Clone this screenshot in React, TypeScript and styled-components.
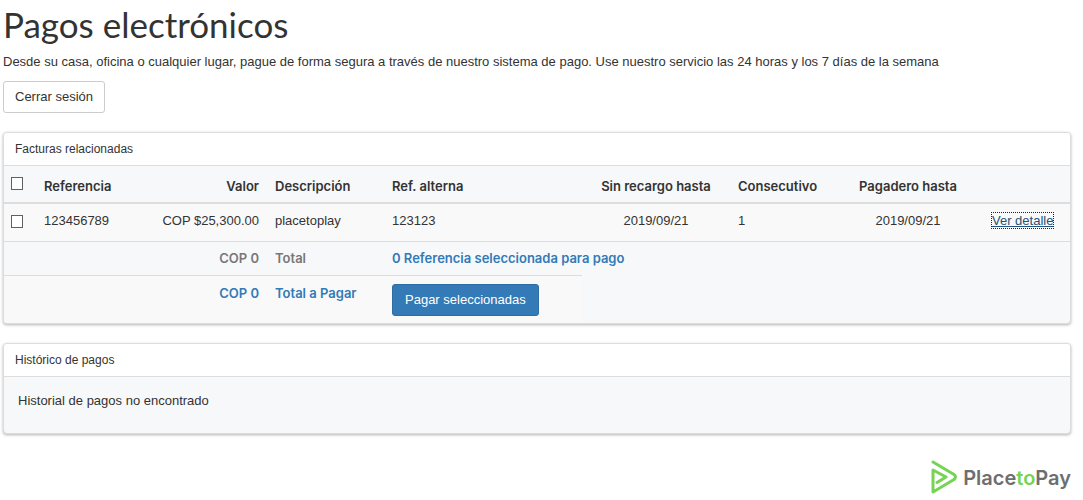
import React from "react";
import styled, { createGlobalStyle } from "styled-components";

const strongFont = `Inter, "Liberation Sans", sans-serif`;

const GlobalStyle = createGlobalStyle`
  *, *::before, *::after { box-sizing: border-box; }
  body {
    margin: 0;
    background: #fff;
    color: #333;
    font-family: "Liberation Sans", Arial, sans-serif;
    font-size: 13px;
    line-height: 20px;
  }
`;

const Page = styled.div`
  padding: 4px 12px 6px 3px;
`;

const Title = styled.h1`
  margin: 0 0 8px;
  font-family: Lato, "Liberation Sans", sans-serif;
  font-size: 35px;
  font-weight: 400;
  line-height: 40px;
`;

const Intro = styled.p`
  margin: 0 0 9px;
`;

const Button = styled.button<{ $primary?: boolean }>`
  display: block;
  height: 32px;
  padding: 0 ${(p) => (p.$primary ? "12px" : "11px")};
  border: 1px solid ${(p) => (p.$primary ? "#2e6da4" : "#ccc")};
  border-radius: 3px;
  background: ${(p) => (p.$primary ? "#337ab7" : "#fff")};
  color: ${(p) => (p.$primary ? "#fff" : "#333")};
  font: inherit;
  white-space: nowrap;
  cursor: pointer;
`;

const Panel = styled.section`
  margin-top: 19px;
  border: 1px solid #ddd;
  border-radius: 4px;
  background: #f7f8fa;
  box-shadow: 0 1px 3px rgba(0, 0, 0, 0.3);
  overflow: hidden;
`;

const PanelHeading = styled.h2`
  margin: 0;
  padding: 6px 11px;
  border-bottom: 1px solid #ddd;
  background: #fff;
  font-size: 12px;
  font-weight: 400;
  line-height: 20px;
`;

const PanelBody = styled.div`
  padding: 14px 14px 22px;
`;

const Table = styled.table`
  width: 100%;
  table-layout: fixed;
  border-collapse: separate;
  border-spacing: 0;
`;

type Align = "left" | "right" | "center";

const HeadCell = styled.th<{ $align?: Align }>`
  padding: 10px 8px 6px;
  border-bottom: 2px solid #ddd;
  font-family: ${strongFont};
  font-weight: 600;
  text-align: ${(p) => p.$align ?? "left"};
  vertical-align: top;
  white-space: nowrap;
`;

const Cell = styled.td<{ $align?: Align }>`
  height: 37px;
  padding: 7px 8px;
  background: #f9f9f9;
  text-align: ${(p) => p.$align ?? "left"};
  vertical-align: top;
  white-space: nowrap;
`;

const TotalCell = styled.td<{ $align?: Align; $tone?: "muted" | "link"; $striped?: boolean }>`
  padding: ${(p) => (p.$striped ? "7px 8px 7px" : "6px 8px 7px")};
  border-top: 1px solid #ddd;
  background: ${(p) => (p.$striped ? "#f9f9f9" : "transparent")};
  color: ${(p) => (p.$tone === "link" ? "#337ab7" : "#777")};
  font-family: ${strongFont};
  font-weight: 600;
  text-align: ${(p) => p.$align ?? "left"};
  vertical-align: top;
  white-space: nowrap;
`;

const ActionCell = styled.td`
  padding: 8px 8px 7px;
  border-top: 1px solid #ddd;
  background: #f9f9f9;
`;

const Checkbox = styled.input`
  appearance: none;
  display: block;
  width: 12px;
  height: 13px;
  margin: 4px 0 3px -1px;
  border: 1px solid #606060;
  background: #fff;

  thead & { margin: 1px 0 6px -1px; }
  &:checked { background: #337ab7; }
`;

const DetailLink = styled.a`
  color: #23527c;
  text-decoration: underline;
  outline: 1px dotted #222;
`;

const Footer = styled.footer`
  display: flex;
  justify-content: flex-end;
  align-items: center;
  gap: 5px;
  margin-top: 26px;
`;

const Brand = styled.span`
  padding-top: 2px;
  color: #6d6e70;
  font-family: ${strongFont};
  font-size: 20px;
  font-weight: 600;
  line-height: 32px;
`;

const BrandAccent = styled.span`
  color: #77d353;
`;

const columnWidths = [32, 114, 117, 117, 198, 148, 102, 152, 86];

export default function App() {
  return (
    <>
      <GlobalStyle />
      <Page>
        <Title>Pagos electrónicos</Title>
        <Intro>
          Desde su casa, oficina o cualquier lugar, pague de forma segura a través de nuestro sistema de pago. Use
          nuestro servicio las 24 horas y los 7 días de la semana
        </Intro>
        <Button type="button">Cerrar sesión</Button>

        <Panel>
          <PanelHeading>Facturas relacionadas</PanelHeading>
          <Table>
            <colgroup>
              {columnWidths.map((width, i) => (
                <col key={i} width={width} />
              ))}
            </colgroup>
            <thead>
              <tr>
                <HeadCell><Checkbox type="checkbox" aria-label="Seleccionar todas" /></HeadCell>
                <HeadCell>Referencia</HeadCell>
                <HeadCell $align="right">Valor</HeadCell>
                <HeadCell>Descripción</HeadCell>
                <HeadCell>Ref. alterna</HeadCell>
                <HeadCell $align="center">Sin recargo hasta</HeadCell>
                <HeadCell>Consecutivo</HeadCell>
                <HeadCell $align="center">Pagadero hasta</HeadCell>
                <HeadCell />
              </tr>
            </thead>
            <tbody>
              <tr>
                <Cell><Checkbox type="checkbox" aria-label="Seleccionar 123456789" /></Cell>
                <Cell>123456789</Cell>
                <Cell $align="right">COP $25,300.00</Cell>
                <Cell>placetoplay</Cell>
                <Cell>123123</Cell>
                <Cell $align="center">2019/09/21</Cell>
                <Cell>1</Cell>
                <Cell $align="center">2019/09/21</Cell>
                <Cell><DetailLink href="#detalle">Ver detalle</DetailLink></Cell>
              </tr>
            </tbody>
            <tfoot>
              <tr>
                <TotalCell colSpan={3} $align="right">COP 0</TotalCell>
                <TotalCell>Total</TotalCell>
                <TotalCell colSpan={5} $tone="link">0 Referencia seleccionada para pago</TotalCell>
              </tr>
              <tr>
                <TotalCell colSpan={3} $align="right" $tone="link" $striped>COP 0</TotalCell>
                <TotalCell $tone="link" $striped>Total a Pagar</TotalCell>
                <ActionCell><Button type="button" $primary>Pagar seleccionadas</Button></ActionCell>
              </tr>
            </tfoot>
          </Table>
        </Panel>

        <Panel>
          <PanelHeading>Histórico de pagos</PanelHeading>
          <PanelBody>Historial de pagos no encontrado</PanelBody>
        </Panel>

        <Footer>
          <svg width="28" height="34" viewBox="0 0 28 34" fill="none" stroke="#77d353" strokeWidth="3" strokeLinejoin="round" strokeLinecap="round" aria-hidden="true">
            <path d="M3 2 L24 14.500 Q27 17 24 19.500 L3 32 V10 L16 17 L7 22.500" />
          </svg>
          <Brand>Place<BrandAccent>to</BrandAccent>Pay</Brand>
        </Footer>
      </Page>
    </>
  );
}
